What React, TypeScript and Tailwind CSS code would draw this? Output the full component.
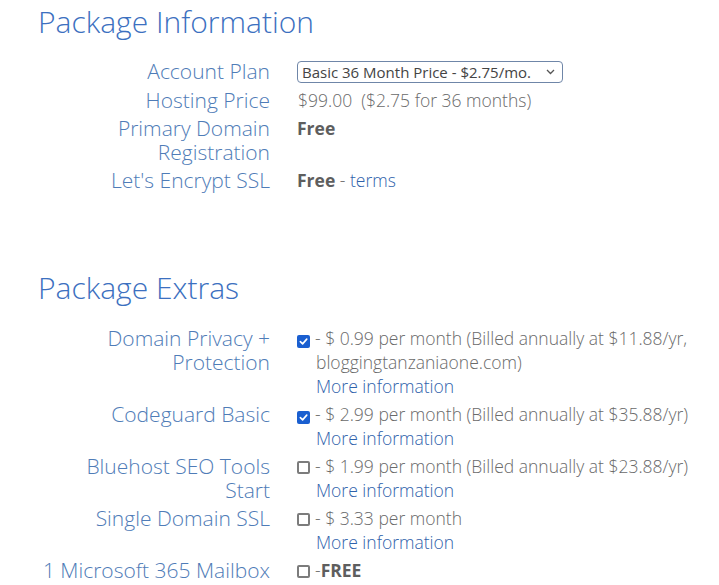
import React from "react";

const font = { fontFamily: '"Open Sans", "Liberation Sans", sans-serif' };

function Box({ checked }: { checked?: boolean }) {
  if (checked) {
    return (
      <span className="inline-flex w-[13px] h-[13px] rounded-[2px] bg-[#1a5fd0] items-center justify-center mr-[5px] align-[-1px]">
        <svg width="9" height="9" viewBox="0 0 10 10">
          <path d="M1.5 5.2 L4 7.6 L8.6 2.4" fill="none" stroke="#fff" strokeWidth="1.8" strokeLinecap="round" strokeLinejoin="round" />
        </svg>
      </span>
    );
  }
  return <span className="inline-block w-[13px] h-[13px] rounded-[2px] border-2 border-[#7c7c7c] bg-white mr-[5px] align-[-1px]" />;
}

function Row({ label, children }: { label: React.ReactNode; children: React.ReactNode }) {
  return (
    <>
      <div className="text-right text-[21px] leading-[24px] font-light text-[#4f7cb7]">{label}</div>
      <div className="text-[17.5px] leading-[24px] text-[#6a6a6a] font-light">{children}</div>
    </>
  );
}

function More() {
  return <div className="pl-[19px] text-[#2f62ab] font-light">More information</div>;
}

export default function App() {
  return (
    <div className="w-[719px] h-[585px] bg-white overflow-hidden pt-[4px]" style={font}>
      <h2 className="pl-[38px] text-[30px] leading-[36px] font-light text-[#3c70c0]">Package Information</h2>
      <div className="grid grid-cols-[270px_1fr] gap-x-[27px] gap-y-[4px] mt-[19px]">
        <Row label="Account Plan">
          <div className="h-[25px] flex items-center">
            <div className="inline-flex items-center h-[22px] w-[266px] border border-[#6f86a8] rounded-[4px] pl-[4px] pr-[7px] text-[15px] font-normal text-[#444]">
              <span className="flex-1 whitespace-nowrap">Basic 36 Month Price - $2.75/mo.</span>
              <svg width="9" height="6" viewBox="0 0 9 6">
                <path d="M1 1 L4.5 4.5 L8 1" fill="none" stroke="#555" strokeWidth="1.3" />
              </svg>
            </div>
          </div>
        </Row>
        <Row label="Hosting Price">
          <span className="pl-[1px]">$99.00&nbsp; ($2.75 for 36 months)</span>
        </Row>
        <Row label={<>Primary Domain<br />Registration</>}>
          <span className="font-bold text-[#5e5e5e]">Free</span>
        </Row>
        <Row label="Let's Encrypt SSL">
          <span className="font-bold text-[#5e5e5e]">Free</span> - <span className="text-[#2f62ab]">terms</span>
        </Row>
      </div>

      <h2 className="pl-[38px] mt-[78px] text-[30px] leading-[36px] font-light text-[#3c70c0]">Package Extras</h2>
      <div className="grid grid-cols-[270px_1fr] gap-x-[27px] gap-y-[4px] mt-[20px]">
        <Row label={<>Domain Privacy +<br />Protection</>}>
          <div className="whitespace-nowrap"><Box checked />- $ 0.99 per month (Billed annually at $11.88/yr,</div>
          <div className="pl-[19px]">bloggingtanzaniaone.com)</div>
          <More />
        </Row>
        <Row label="Codeguard Basic">
          <div className="whitespace-nowrap"><Box checked />- $ 2.99 per month (Billed annually at $35.88/yr)</div>
          <More />
        </Row>
        <Row label={<>Bluehost SEO Tools<br />Start</>}>
          <div className="whitespace-nowrap"><Box />- $ 1.99 per month (Billed annually at $23.88/yr)</div>
          <More />
        </Row>
        <Row label="Single Domain SSL">
          <div className="whitespace-nowrap"><Box />- $ 3.33 per month</div>
          <More />
        </Row>
        <Row label="1 Microsoft 365 Mailbox">
          <div className="whitespace-nowrap"><Box />-<span className="font-bold text-[#5e5e5e]">FREE</span></div>
        </Row>
      </div>
    </div>
  );
}
